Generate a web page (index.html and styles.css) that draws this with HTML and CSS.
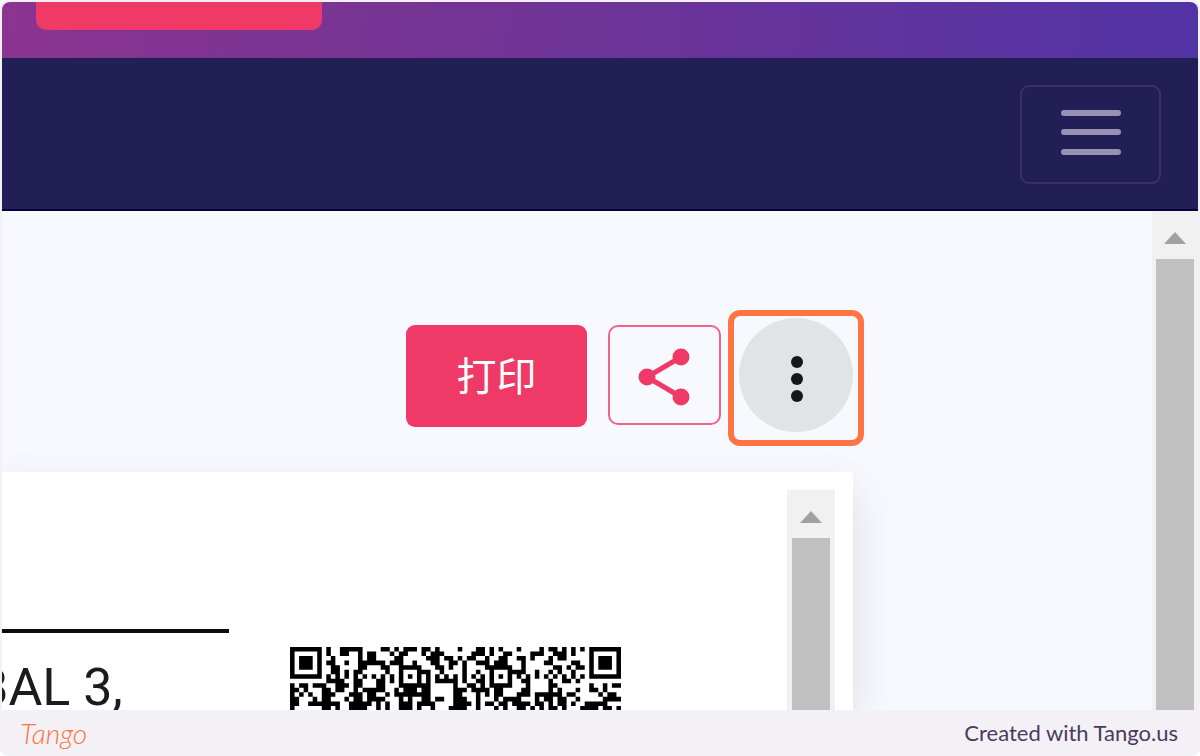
FILE: index.html
```html
<!DOCTYPE html>
<html lang="zh">
<head>
<meta charset="utf-8">
<title>打印</title>
<link rel="stylesheet" href="styles.css">
</head>
<body>
<div class="frame">
  <div class="shot">
    <div class="ribbon"><button class="ribbon-button" type="button" aria-label="Promotion"></button></div>
    <nav class="navbar">
      <button class="menu-button" type="button" aria-label="Menu">
        <svg class="menu-icon" viewBox="0 0 60 48" aria-hidden="true"><path d="M3 4H57M3 23H57M3 43H57"/></svg>
      </button>
    </nav>
    <div class="content">
      <main class="main">
        <div class="toolbar">
          <button class="print-button" type="button">打印</button>
          <button class="share-button" type="button" aria-label="Share">
            <svg class="share-icon" viewBox="0 0 52 56" aria-hidden="true"><path d="M43 8L9 28L43 48"/><circle cx="9" cy="28" r="8.5"/><circle cx="43" cy="8" r="8.5"/><circle cx="43" cy="48" r="8.5"/></svg>
          </button>
          <div class="highlight">
            <button class="more-button" type="button" aria-label="More">
              <svg class="more-icon" viewBox="0 0 12 46" aria-hidden="true"><circle cx="6" cy="6" r="6"/><circle cx="6" cy="23" r="6"/><circle cx="6" cy="40" r="6"/></svg>
            </button>
          </div>
        </div>
        <section class="card">
          <div class="document">
            <div class="address"><p class="address-line">BAL 3,</p></div>
            <svg class="qr" viewBox="0 0 73 14" role="img" aria-label="QR code"><path id="qr-modules"/></svg>
          </div>
          <div class="scrollbar card-scrollbar">
            <svg class="arrow" viewBox="0 0 22 12" aria-hidden="true"><path d="M0 12L11 0L22 12Z"/></svg>
            <div class="thumb"></div>
          </div>
        </section>
      </main>
      <div class="scrollbar">
        <svg class="arrow" viewBox="0 0 22 12" aria-hidden="true"><path d="M0 12L11 0L22 12Z"/></svg>
        <div class="thumb"></div>
      </div>
    </div>
  </div>
  <footer class="footer">
    <span class="brand">Tango</span>
    <span class="credit">Created with Tango.us</span>
  </footer>
</div>
<script src="qr.js"></script>
</body>
</html>
```
FILE: styles.css
```css
* { box-sizing: border-box; }
body { margin: 0; background: #fff; font-family: "Liberation Sans", "Noto Sans CJK SC", sans-serif; }
button { font: inherit; border: 0; padding: 0; margin: 0; flex: none; cursor: pointer; }
svg { display: block; }

.frame { display: flex; flex-direction: column; height: 100vh; padding: 2px 2px 0; background: #f3f1f6; border-radius: 8px; overflow: hidden; }
.shot { flex: 1; min-height: 0; display: flex; flex-direction: column; border-radius: 8px 8px 0 0; overflow: hidden; background: #f8f9fe; }

.ribbon { flex: none; height: 56px; padding-left: 34px; background: linear-gradient(97deg, #8b3490 0%, #763494 34%, #5233a4 100%); }
.ribbon-button { display: block; width: 286px; height: 28px; border-radius: 0 0 10px 10px; background: #ef3a67; }

.navbar { flex: none; display: flex; justify-content: flex-end; padding: 27px 37px 25px; background: #221f57; border-bottom: 2px solid #02003f; }
.menu-button { display: flex; align-items: center; justify-content: center; width: 141px; height: 99px; padding-bottom: 4px; border: 2px solid #383269; border-radius: 9px; background: transparent; }
.menu-icon { width: 60px; height: 48px; fill: none; stroke: #9791b5; stroke-width: 6; stroke-linecap: round; }

.content { flex: 1; min-height: 0; display: flex; }
.main { flex: 1; min-width: 0; display: flex; flex-direction: column; padding: 99px 288px 0 0; }
.toolbar { flex: none; display: flex; justify-content: flex-end; }
.print-button { width: 181px; height: 102px; margin: 15px 21px 0 0; padding-bottom: 4px; border-radius: 9px; background: #ef3a67; color: #fff; font-size: 40px; font-weight: 400; font-family: "Noto Sans CJK SC", sans-serif; }
.share-button { display: flex; align-items: center; justify-content: center; width: 113px; height: 100px; margin: 15px 7px 0 0; padding: 4px 2px 0 0; border: 2px solid #f26385; border-radius: 10px; background: transparent; }
.share-icon { width: 52px; height: 56px; overflow: visible; fill: #ef3a67; }
.share-icon path { fill: none; stroke: #ef3a67; stroke-width: 5; }
.highlight { flex: none; width: 136px; height: 136px; padding: 2px 5px; border: 6px solid #ff7442; border-radius: 12px; }
.more-button { display: flex; align-items: center; justify-content: center; width: 114px; height: 114px; padding: 8px 0 0 2px; border-radius: 50%; background: #e0e4e6; }
.more-icon { width: 12px; height: 46px; fill: #16171b; }

.card { flex: 1; min-height: 0; display: flex; margin: 26px 11px 0 0; padding: 18px 18px 0 0; background: #fff; box-shadow: 0 16px 40px rgba(60, 65, 90, 0.14); }
.document { flex: 1; min-width: 0; display: flex; align-items: flex-start; gap: 61px; padding-top: 139px; overflow: hidden; }
.address { flex: none; width: 227px; display: flex; border-top: 4px solid #0c0c0c; }
.address-line { margin: 29px 0 0 -26px; font: 400 52px/52px Roboto, sans-serif; color: #1c1c1c; white-space: nowrap; }
.qr { flex: none; width: 331px; margin-top: 18px; fill: #000; }

.scrollbar { flex: none; width: 46px; display: flex; flex-direction: column; align-items: center; padding-top: 21px; background: #f1f1f1; }
.card-scrollbar { width: 48px; }
.arrow { flex: none; width: 22px; height: 12px; fill: #a1a1a1; }
.thumb { flex: 1; width: 38px; margin-top: 15px; background: #c0c0c0; }

.footer { flex: none; height: 46px; display: flex; align-items: center; justify-content: space-between; padding: 0 20px 0 18px; }
.brand { font: italic 300 28px/28px Lato, sans-serif; color: #ff7442; }
.credit { font: 400 22px/28px Lato, sans-serif; color: #4a3a60; }
```
FILE: qr.js
```js
// Visible rows of the QR code, one character per module.
const rows = [
  "#######.#..#####.." + "..##.#.###.##.#..." + ".#...##.#.#...#..." + ".#.##.#.#.#.#######",
  "#.....#.#..##..#.#" + "#...#.##...#.###.." + "....###.#..##....#" + "##..###.#...#.....#",
  "#.###.#..#.....#.#" + "#....##.....###.##" + ".#.##..#..##..##.#" + "...#.##.....#.###.#",
  "#.###.#.##..#..###" + "###.###..#...##..#" + "#.#..###.###...#.." + "..##....##..#.###.#",
  "#.###.#..##....##." + "..##..#####...##.#" + "..#....######..#.." + "....##.#.##.#.###.#",
  "#.....#..##.#.##.." + "...#..#...###..#.." + "..#..#..#...####.." + "#..#.#..#...#.....#",
  "#######.#.#.#.#.#." + "#.#.#.#.#.#.#.#.#." + "#.#.#.#.#.#.#.#.#." + "#.#.#.#.#.#.#######",
  "........####..##.." + ".##.#.#...#.#.####" + "#.#..##.#...#..##." + "...#..##.#.........",
  "#.##.###..###.##.." + ".##...#######....." + "#..##.#.#####...#." + "...##.......#..#.##",
  "##.#...##.##..#.##" + "###..#.###.##....." + "###.####.##....##." + "...#.#...#..##.#...",
  "#.#.#..###...###.#" + "#..#.########....." + "##...#.#.##...###." + "######.##.....#.##.",
  "##...#.##...#.##.#" + "###...#.#..##.##.." + "###..#...#.####..." + "#.##.##..#.....####",
  "##..#######..#####" + ".#.#..###.####...." + "####.#.##.##.####." + "##.#.##.#..#####...",
  "#......##.#..####." + ".#.#..###.#..#...#" + "###..#...#.#..##.#" + ".#.##.#...####.##.#"
];
let path = "";
rows.forEach((row, y) => {
  for (const run of row.matchAll(/#+/g)) {
    path += `M${run.index} ${y}h${run[0].length}v1h-${run[0].length}z`;
  }
});
document.getElementById("qr-modules").setAttribute("d", path);
```
